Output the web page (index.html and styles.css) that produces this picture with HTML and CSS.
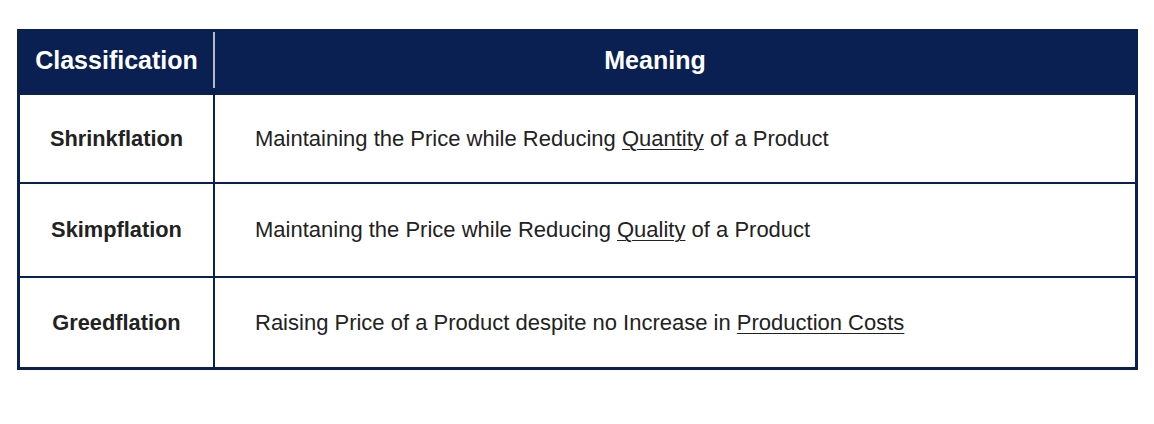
FILE: index.html
```html
<!DOCTYPE html>
<html>
<head>
<meta charset="utf-8">
<link rel="stylesheet" href="styles.css">
</head>
<body>
<div class="wrap">
  <table class="tbl">
    <thead>
      <tr>
        <th class="c1 h1">Classification</th>
        <th class="c2">Meaning</th>
      </tr>
    </thead>
    <tbody>
      <tr class="r1">
        <td class="c1">Shrinkflation</td>
        <td class="c2">Maintaining the Price while Reducing <u>Quantity</u> of a Product</td>
      </tr>
      <tr class="r2">
        <td class="c1">Skimpflation</td>
        <td class="c2">Maintaning the Price while Reducing <u>Quality</u> of a Product</td>
      </tr>
      <tr class="r3">
        <td class="c1">Greedflation</td>
        <td class="c2">Raising Price of a Product despite no Increase in <u>Production Costs</u></td>
      </tr>
    </tbody>
  </table>
</div>
</body>
</html>
```
FILE: styles.css
```css
html, body {
  margin: 0;
  padding: 0;
  background: #ffffff;
}
body {
  font-family: "Liberation Sans", Arial, sans-serif;
}
.wrap {
  padding: 29px 0 0 17px;
}
.tbl {
  width: 1121px;
  border-collapse: collapse;
  border: 3px solid #0a1f52;
  table-layout: fixed;
}
.tbl th {
  background: #0a1f52;
  color: #ffffff;
  font-weight: bold;
  font-size: 25px;
  height: 57px;
  padding: 0 0 4px 0;
  text-align: center;
}
.tbl th.h1 {
  position: relative;
  border-right: 2px solid #0a1f52;
}
.tbl th.h1::after {
  content: "";
  position: absolute;
  right: -2px;
  top: 0;
  height: 56px;
  width: 2px;
  background: #b5b9c2;
}
.tbl td {
  border-top: 2px solid #0a1f52;
  padding: 0;
  color: #222222;
}
.c1 {
  width: 193px;
}
.tbl td.c1 {
  border-right: 2px solid #0a1f52;
  text-align: center;
  font-weight: bold;
  font-size: 21.8px;
}
.tbl td.c2 {
  padding-left: 40px;
  font-size: 22px;
}
.tbl th.c2 {
  padding-right: 40px;
}
.r1 td { height: 87px; }
.r2 td { height: 92px; }
.r3 td { height: 89px; }
u {
  text-underline-offset: 3px;
  text-decoration-thickness: 1px;
}
```
